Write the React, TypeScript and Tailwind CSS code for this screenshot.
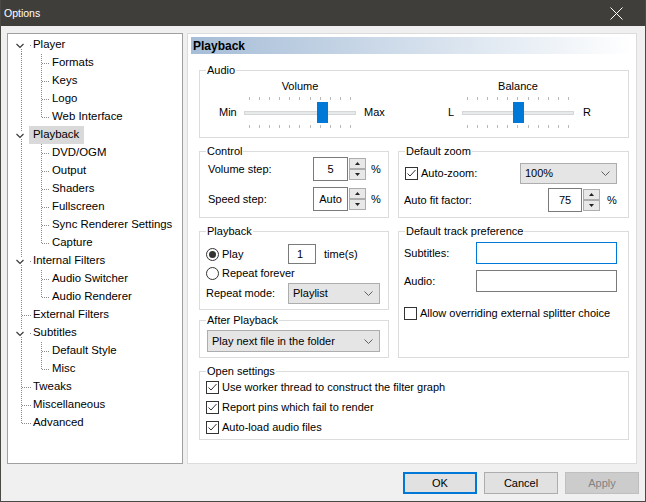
import { ReactNode } from "react";

interface TreeItem {
  name: string;
  children?: string[];
  selected?: boolean;
}

const tree: TreeItem[] = [
  { name: "Player", children: ["Formats", "Keys", "Logo", "Web Interface"] },
  {
    name: "Playback",
    selected: true,
    children: ["DVD/OGM", "Output", "Shaders", "Fullscreen", "Sync Renderer Settings", "Capture"],
  },
  { name: "Internal Filters", children: ["Audio Switcher", "Audio Renderer"] },
  { name: "External Filters" },
  { name: "Subtitles", children: ["Default Style", "Misc"] },
  { name: "Tweaks" },
  { name: "Miscellaneous" },
  { name: "Advanced" },
];

const dot = { stroke: "#8a8a8a", strokeDasharray: "1 1", shapeRendering: "crispEdges" as const };

function RootGutter({ first, last, expandable }: { first: boolean; last: boolean; expandable: boolean }) {
  return (
    <svg width="25" height="18" className="shrink-0">
      {expandable ? (
        <>
          {!first && <line x1="13.5" y1="0" x2="13.5" y2="6" {...dot} />}
          {!last && <line x1="13.5" y1="13" x2="13.5" y2="18" {...dot} />}
          <polyline points="8.5,8 12,11.5 15.5,8" fill="none" stroke="#3a3a3a" strokeWidth="1.2" />
          <rect x="22" y="9" width="1" height="1" fill="#8a8a8a" />
        </>
      ) : (
        <>
          <line x1="13.5" y1="0" x2="13.5" y2={last ? 10 : 18} {...dot} />
          <line x1="14" y1="9.5" x2="23" y2="9.5" {...dot} />
        </>
      )}
    </svg>
  );
}

function ChildGutter({ lastChild }: { lastChild: boolean }) {
  return (
    <svg width="44" height="18" className="shrink-0">
      <line x1="13.5" y1="0" x2="13.5" y2="18" {...dot} />
      <line x1="33.5" y1="0" x2="33.5" y2={lastChild ? 10 : 18} {...dot} />
      <line x1="34" y1="9.5" x2="42" y2="9.5" {...dot} />
    </svg>
  );
}

function Group({ label, className, children }: { label: string; className?: string; children?: ReactNode }) {
  return (
    <div className={`relative border border-[#dcdcdc] ${className ?? ""}`}>
      <span className="absolute left-[6px] -top-[8px] bg-white px-[1px] leading-[14px]">{label}</span>
      {children}
    </div>
  );
}

function Checkbox({ checked }: { checked?: boolean }) {
  return (
    <span className="w-[13px] h-[13px] shrink-0 border border-[#333333] bg-white flex items-center justify-center">
      {checked && (
        <svg width="11" height="11" viewBox="0 0 11 11">
          <polyline points="1.5,5.5 4,8 9.5,2" fill="none" stroke="#333333" strokeWidth="1" />
        </svg>
      )}
    </span>
  );
}

function Radio({ checked }: { checked?: boolean }) {
  return (
    <span className="w-[13px] h-[13px] shrink-0 rounded-full border border-[#333333] bg-white flex items-center justify-center">
      {checked && <span className="w-[7px] h-[7px] rounded-full bg-[#333333]" />}
    </span>
  );
}

function Combo({ value, className }: { value: string; className: string }) {
  return (
    <div className={`flex items-center justify-between bg-[#e5e5e5] border border-[#adadad] pl-[4px] pr-[6px] ${className}`}>
      <span>{value}</span>
      <svg width="9" height="5" viewBox="0 0 9 5">
        <polyline points="0.5,0.5 4.5,4.5 8.5,0.5" fill="none" stroke="#606060" strokeWidth="1" />
      </svg>
    </div>
  );
}

function SpinButton({ up }: { up?: boolean }) {
  return (
    <div className="h-[11px] border border-[#adadad] bg-[#e8e8e8] flex items-center justify-center">
      <svg width="5" height="3" viewBox="0 0 5 3">
        <polygon points={up ? "0,3 2.5,0 5,3" : "0,0 2.5,3 5,0"} fill="#222222" />
      </svg>
    </div>
  );
}

function SpinEdit({ value, width }: { value: string; width: string }) {
  return (
    <div className="flex h-[24px]">
      <div className={`h-full border border-[#7a7a7a] bg-white flex items-center justify-center ${width}`}>{value}</div>
      <div className="ml-[1px] w-[17px] h-full py-[1px] flex flex-col justify-between">
        <SpinButton up />
        <SpinButton />
      </div>
    </div>
  );
}

function Slider({ thumb }: { thumb: string }) {
  const ticks = Array.from({ length: 11 });
  return (
    <div className="relative h-[31px] w-[112px]">
      <div className="absolute top-0 left-[5px] right-[5px] flex justify-between">
        {ticks.map((_, i) => (
          <span key={i} className="w-px h-[3px] bg-[#b8b8b8]" />
        ))}
      </div>
      <div className="absolute top-[14px] left-0 right-0 h-[4px] bg-[#e7eaea] border border-[#d6d6d6]" />
      <div className={`absolute top-[5px] h-[21px] w-[11px] bg-[#0078d7] ${thumb}`} />
      <div className="absolute top-[28px] left-[5px] right-[5px] flex justify-between">
        {ticks.map((_, i) => (
          <span key={i} className="w-px h-[3px] bg-[#b8b8b8]" />
        ))}
      </div>
    </div>
  );
}

export default function App() {
  return (
    <div className="w-[646px] h-[502px] flex flex-col bg-[#f0f0f0] border-x border-b border-[#4a4946] font-['Liberation_Sans',Arial,sans-serif] text-[11px] text-black leading-none select-none">
      {/* title bar */}
      <div className="h-[26px] shrink-0 bg-[#403e3b] flex items-center justify-between pl-[3px] pr-[22px] text-white text-[10.5px]">
        <span>Options</span>
        <svg width="13" height="13" viewBox="0 0 13 13">
          <path d="M0.5 0.5L12.5 12.5M12.5 0.5L0.5 12.5" stroke="#ffffff" strokeWidth="1" />
        </svg>
      </div>

      <div className="flex-1 flex flex-col pl-[6px] pr-[8px] pt-[7px]">
        <div className="flex gap-[4px] h-[431px]">
          {/* tree */}
          <div className="w-[176px] shrink-0 border border-[#a0a0a0] bg-white pt-[2px] text-[11.4px]">
            {tree.map((item, i) => (
              <div key={item.name}>
                <div className="flex h-[18px] items-center">
                  <RootGutter first={i === 0} last={i === tree.length - 1} expandable={!!item.children} />
                  <span
                    className={`h-full flex items-center -ml-[4px] pl-[4px] pr-[5px] ${item.selected ? "bg-[#d9d9d9]" : ""}`}
                  >
                    {item.name}
                  </span>
                </div>
                {item.children?.map((child, j) => (
                  <div key={child} className="flex h-[18px] items-center">
                    <ChildGutter lastChild={j === item.children!.length - 1} />
                    <span>{child}</span>
                  </div>
                ))}
              </div>
            ))}
          </div>

          {/* page */}
          <div className="flex-1 border border-[#dcdcdc] bg-white p-[3px]">
            <div className="h-[17px] bg-linear-to-r from-[#a6bdd7] to-[#ffffff] flex items-center pl-[2px] font-bold text-[12px]">
              Playback
            </div>

            <div className="pl-[8px] pr-[4px] mt-[16px]">
              <Group label="Audio" className="pt-[8px] pb-[9px] pl-[19px]">
                <div className="grid grid-cols-[25px_112px_92px_14px_112px_auto] gap-y-[4px] items-center">
                  <span className="col-start-2 text-center leading-[14px]">Volume</span>
                  <span className="col-start-5 text-center leading-[14px]">Balance</span>
                  <span className="col-start-1">Min</span>
                  <Slider thumb="left-[73px]" />
                  <span className="pl-[8px]">Max</span>
                  <span>L</span>
                  <Slider thumb="left-[51px]" />
                  <span className="pl-[9px]">R</span>
                </div>
              </Group>

              <div className="mt-[13px] grid grid-cols-[190px_1fr] gap-x-[9px] gap-y-[13px]">
                <Group label="Control" className="pt-[5px] pb-[6px] pl-[8px] flex flex-col gap-[6px]">
                  <div className="flex items-center h-[24px]">
                    <span className="w-[105px]">Volume step:</span>
                    <SpinEdit value="5" width="w-[35px]" />
                    <span className="ml-[5px]">%</span>
                  </div>
                  <div className="flex items-center h-[24px]">
                    <span className="w-[105px]">Speed step:</span>
                    <SpinEdit value="Auto" width="w-[35px]" />
                    <span className="ml-[5px]">%</span>
                  </div>
                </Group>

                <Group label="Default zoom" className="pt-[9px] pb-[5px] flex flex-col gap-[3px]">
                  <div className="flex items-center h-[24px] pl-[6px]">
                    <span className="w-[115px] flex items-center gap-[3px]">
                      <Checkbox checked />
                      Auto-zoom:
                    </span>
                    <Combo value="100%" className="w-[97px] h-[21px]" />
                  </div>
                  <div className="flex items-center h-[24px] pl-[5px]">
                    <span className="w-[144px]">Auto fit factor:</span>
                    <SpinEdit value="75" width="w-[34px]" />
                    <span className="ml-[7px]">%</span>
                  </div>
                </Group>

                <div className="flex flex-col gap-[10px]">
                  <Group label="Playback" className="pt-[12px] pb-[5px] pl-[6px]">
                    <div className="flex items-center h-[20px]">
                      <span className="w-[82px] flex items-center gap-[3px]">
                        <Radio checked />
                        Play
                      </span>
                      <div className="w-[28px] h-[20px] border border-[#7a7a7a] bg-white flex items-center pl-[8px]">1</div>
                      <span className="ml-[8px]">time(s)</span>
                    </div>
                    <div className="flex items-center h-[19px] gap-[3px]">
                      <Radio />
                      Repeat forever
                    </div>
                    <div className="flex items-center h-[21px]">
                      <span className="w-[82px]">Repeat mode:</span>
                      <Combo value="Playlist" className="w-[92px] h-[21px]" />
                    </div>
                  </Group>
                  <Group label="After Playback" className="pt-[9px] pb-[5px] pl-[7px]">
                    <Combo value="Play next file in the folder" className="w-[173px] h-[22px]" />
                  </Group>
                </div>

                <Group label="Default track preference" className="pt-[10px] pl-[5px]">
                  <div className="flex items-center h-[22px]">
                    <span className="w-[72px]">Subtitles:</span>
                    <div className="w-[141px] h-[22px] border border-[#0078d7] bg-white" />
                  </div>
                  <div className="flex items-center h-[22px] mt-[6px]">
                    <span className="w-[72px]">Audio:</span>
                    <div className="w-[141px] h-[22px] border border-[#7a7a7a] bg-white" />
                  </div>
                  <div className="flex items-center h-[14px] mt-[14px] gap-[3px]">
                    <Checkbox />
                    Allow overriding external splitter choice
                  </div>
                </Group>
              </div>

              <Group label="Open settings" className="mt-[13px] pt-[5px] pb-[2px] pl-[6px]">
                {[
                  "Use worker thread to construct the filter graph",
                  "Report pins which fail to render",
                  "Auto-load audio files",
                ].map((text) => (
                  <div key={text} className="flex items-center h-[20px] gap-[3px]">
                    <Checkbox checked />
                    {text}
                  </div>
                ))}
              </Group>
            </div>
          </div>
        </div>

        {/* buttons */}
        <div className="flex justify-end gap-[7px] mt-[8px] -mr-[2px] text-[11px]">
          <button className="w-[74px] h-[22px] bg-[#e1e1e1] border-2 border-[#0078d7]">OK</button>
          <button className="w-[74px] h-[22px] bg-[#e1e1e1] border border-[#adadad]">Cancel</button>
          <button className="w-[74px] h-[22px] bg-[#cccccc] border border-[#bfbfbf] text-[#838383]">Apply</button>
        </div>
      </div>
    </div>
  );
}
